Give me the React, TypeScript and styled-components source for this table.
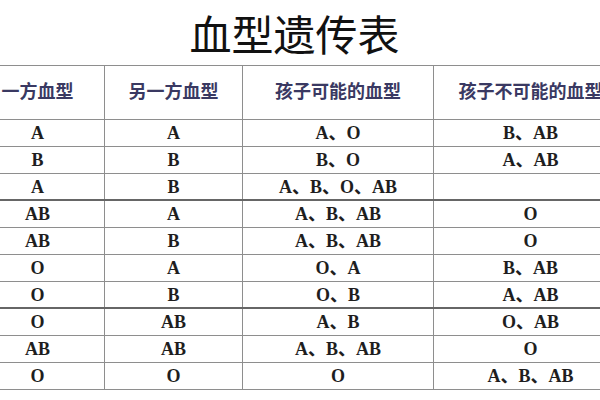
import React from "react";
import styled, { createGlobalStyle } from "styled-components";

const Global = createGlobalStyle`
  html, body {
    margin: 0;
    padding: 0;
    background: #ffffff;
    overflow: hidden;
  }
  body {
    width: 600px;
    height: 400px;
  }
`;

const Page = styled.div`
  width: 657px;
  margin-left: -30px;
  display: flex;
  flex-direction: column;
`;

const Title = styled.h1`
  margin: 0;
  height: 65px;
  display: flex;
  align-items: center;
  justify-content: center;
  padding: 0 8px 0 0;
  font-family: "Noto Sans CJK SC", sans-serif;
  font-weight: 400;
  font-size: 42px;
  line-height: 1;
  color: #111111;
`;

const Table = styled.table`
  width: 657px;
  table-layout: fixed;
  border-collapse: collapse;
`;

const HeadCell = styled.th`
  height: 50px;
  padding: 0 0 3px;
  border: 1px solid #8e8e8e;
  font-family: "Noto Sans CJK SC", sans-serif;
  font-weight: 700;
  font-size: 18px;
  line-height: 1.2;
  color: #3a3962;
  text-align: center;
  vertical-align: middle;
  white-space: nowrap;
`;

const Cell = styled.td<{ $thick?: boolean }>`
  height: ${(p) => (p.$thick ? 23 : 24)}px;
  padding: 2px 0 0;
  border: 1px solid #8e8e8e;
  border-bottom: ${(p) => (p.$thick ? "2px solid #666666" : "1px solid #8e8e8e")};
  font-family: "Liberation Serif", "Noto Sans CJK SC", serif;
  font-weight: 700;
  font-size: 18px;
  line-height: 1.1;
  color: #1e1e1e;
  text-align: center;
  vertical-align: middle;
  white-space: nowrap;
`;

const rows: { a: string; b: string; can: string; cannot: string; thick?: boolean }[] = [
  { a: "A", b: "A", can: "A、O", cannot: "B、AB" },
  { a: "B", b: "B", can: "B、O", cannot: "A、AB" },
  { a: "A", b: "B", can: "A、B、O、AB", cannot: "", thick: true },
  { a: "AB", b: "A", can: "A、B、AB", cannot: "O" },
  { a: "AB", b: "B", can: "A、B、AB", cannot: "O" },
  { a: "O", b: "A", can: "O、A", cannot: "B、AB" },
  { a: "O", b: "B", can: "O、B", cannot: "A、AB", thick: true },
  { a: "O", b: "AB", can: "A、B", cannot: "O、AB" },
  { a: "AB", b: "AB", can: "A、B、AB", cannot: "O" },
  { a: "O", b: "O", can: "O", cannot: "A、B、AB" },
];

export default function App() {
  return (
    <Page>
      <Global />
      <Title>血型遗传表</Title>
      <Table>
        <colgroup>
          <col style={{ width: 134 }} />
          <col style={{ width: 138 }} />
          <col style={{ width: 191 }} />
          <col style={{ width: 194 }} />
        </colgroup>
        <thead>
          <tr>
            <HeadCell>一方血型</HeadCell>
            <HeadCell>另一方血型</HeadCell>
            <HeadCell>孩子可能的血型</HeadCell>
            <HeadCell>孩子不可能的血型</HeadCell>
          </tr>
        </thead>
        <tbody>
          {rows.map((r, i) => (
            <tr key={i}>
              <Cell $thick={r.thick}>{r.a}</Cell>
              <Cell $thick={r.thick}>{r.b}</Cell>
              <Cell $thick={r.thick}>{r.can}</Cell>
              <Cell $thick={r.thick}>{r.cannot}</Cell>
            </tr>
          ))}
        </tbody>
      </Table>
    </Page>
  );
}
